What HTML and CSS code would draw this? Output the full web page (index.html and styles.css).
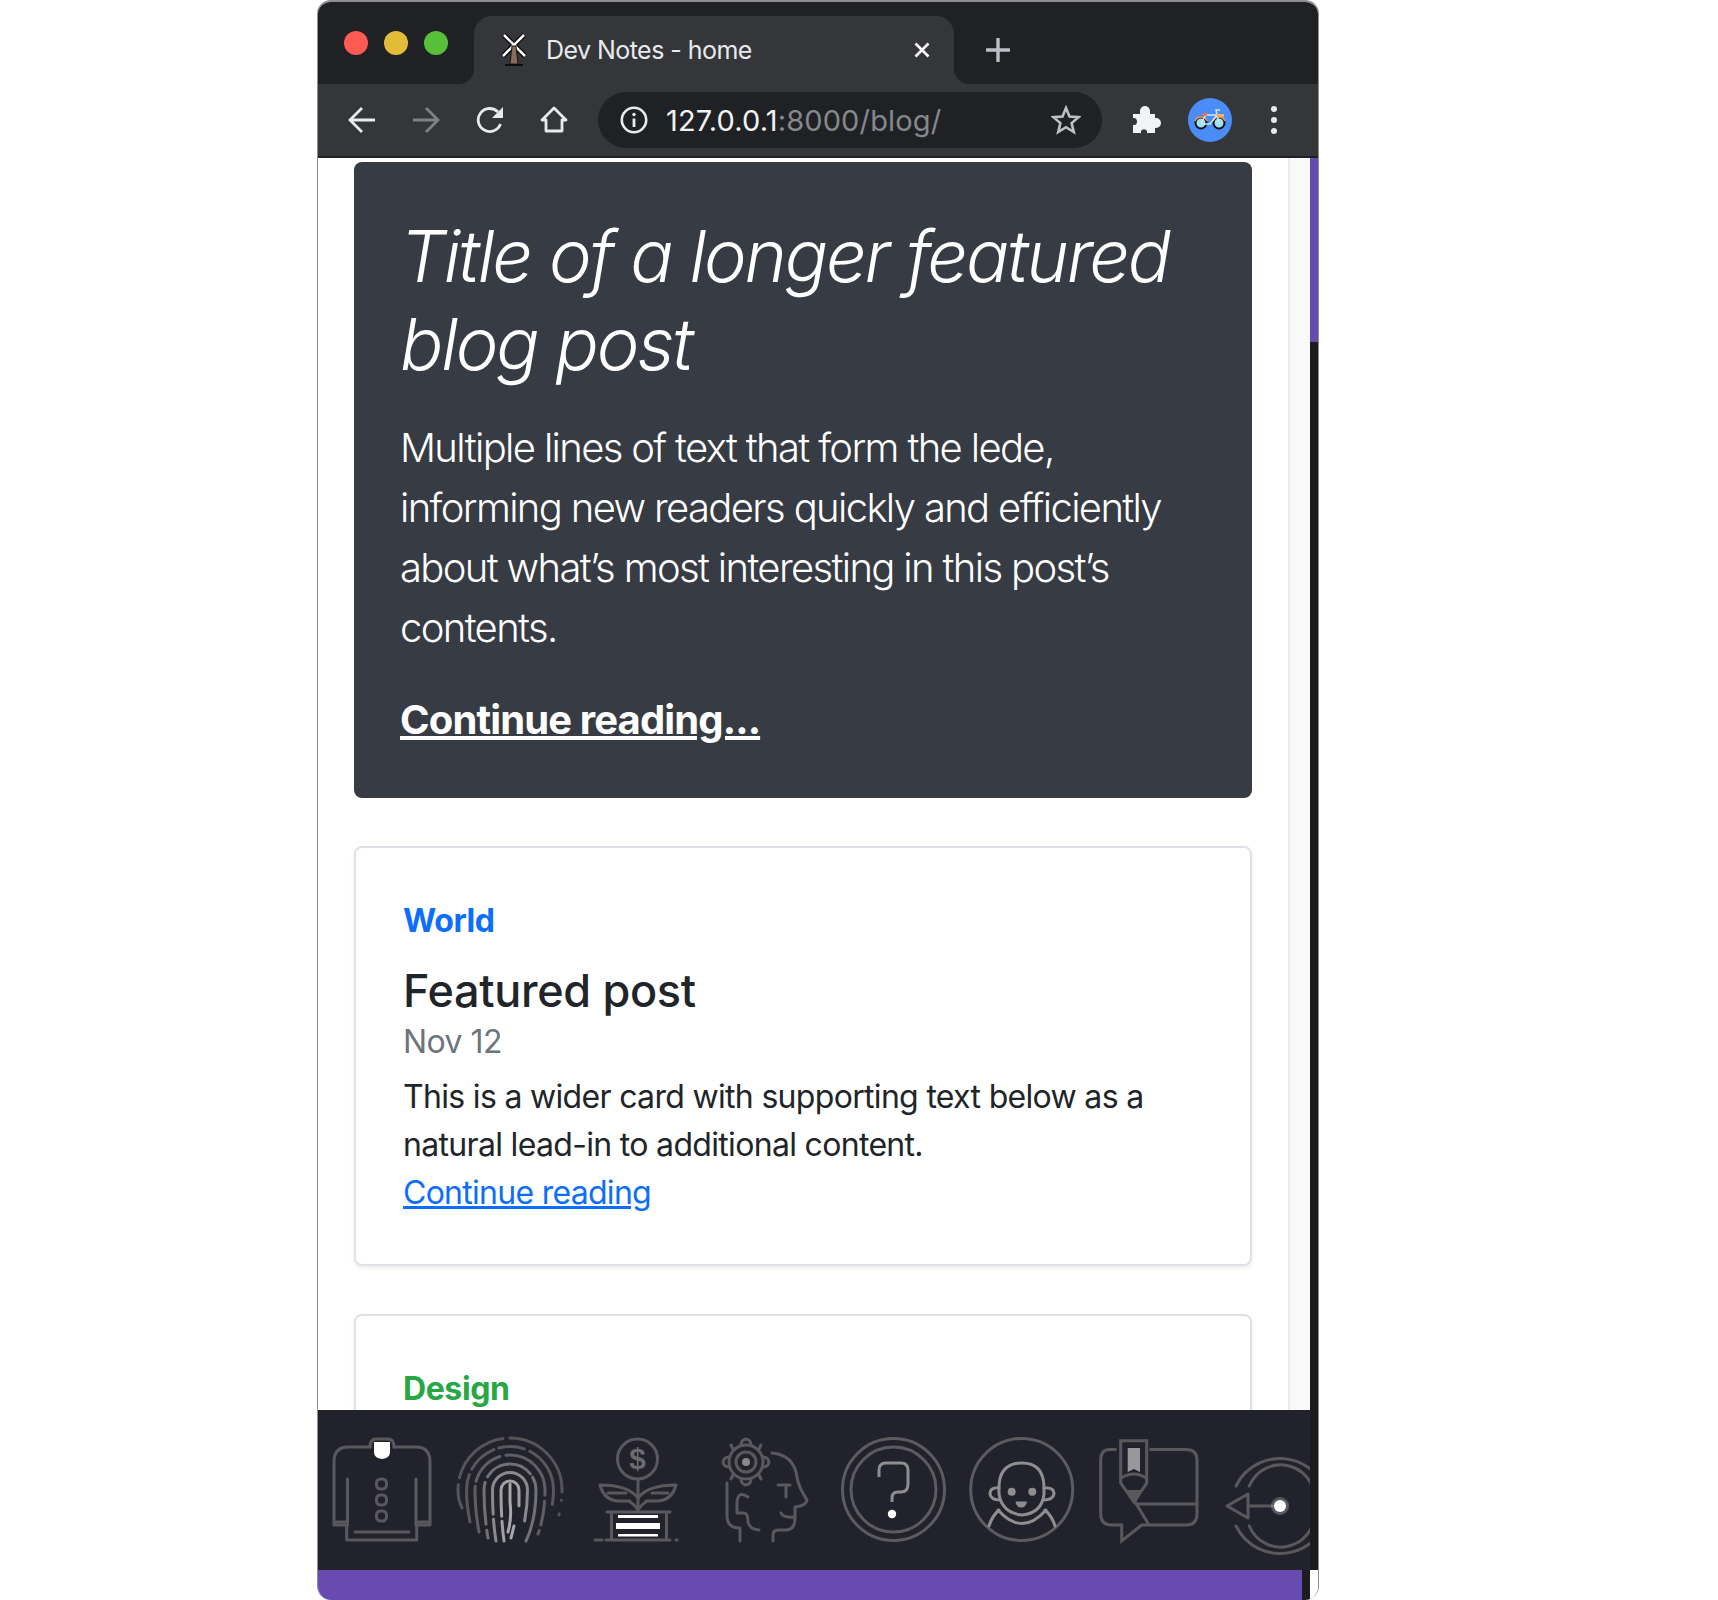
FILE: index.html
```html
<!DOCTYPE html>
<html lang="en">
<head>
    <meta charset="UTF-8">
    <meta name="viewport" content="width=device-width, initial-scale=1.0">
    <title>Dev Notes - home</title>
    <link rel="stylesheet" href="styles.css">
</head>
<body>

    <div class="window">

        <div class="tabstrip">
            <div class="lights">
                <span class="light red"></span>
                <span class="light yellow"></span>
                <span class="light green"></span>
            </div>
            <div class="tab">
                <svg class="favicon" width="28" height="34" viewBox="0 0 28 34">
                    <path d="M4 2 L25 23" stroke="#000" stroke-width="5"/>
                    <path d="M24 2 L3 23" stroke="#000" stroke-width="5"/>
                    <path d="M4 2 L25 23" stroke="#fff" stroke-width="2.5"/>
                    <path d="M24 2 L3 23" stroke="#fff" stroke-width="2.5"/>
                    <path d="M10 31 L12 13 H16 L18 31 Z" fill="#8a6a58" stroke="#1a1a1a" stroke-width="1"/>
                    <path d="M5 32 H23" stroke="#000" stroke-width="1.5"/>
                </svg>
                <span class="tab-title">Dev Notes - home</span>
                <svg class="tab-close" width="16" height="16" viewBox="0 0 16 16">
                    <path d="M1.5 1.5 L14.5 14.5 M14.5 1.5 L1.5 14.5" stroke="#fff" stroke-width="2.6"/>
                </svg>
            </div>
            <svg class="new-tab" width="24" height="24" viewBox="0 0 24 24">
                <path d="M12 1 V23 M1 12 H23" stroke="#bdc1c6" stroke-width="3.4" stroke-linecap="round"/>
            </svg>
        </div>

        <div class="toolbar">
            <svg class="tool" width="28" height="28" viewBox="0 0 28 28">
                <path d="M27 14 H3 M14 2 L2 14 L14 26" fill="none" stroke="#e8eaed" stroke-width="2.8"/>
            </svg>
            <svg class="tool" width="28" height="28" viewBox="0 0 28 28">
                <path d="M1 14 H25 M14 2 L26 14 L14 26" fill="none" stroke="#7f8184" stroke-width="2.8"/>
            </svg>
            <svg class="tool" width="28" height="28" viewBox="0 0 28 28">
                <path d="M24.5 18 A11.5 11.5 0 1 1 22 6" fill="none" stroke="#e8eaed" stroke-width="2.8"/>
                <path d="M27 1 V12 H16 Z" fill="#e8eaed"/>
            </svg>
            <svg class="tool" width="28" height="28" viewBox="0 0 28 28">
                <path d="M2 14 L14 2 L26 14 H22 V25 H6 V14 Z" fill="none" stroke="#e8eaed" stroke-width="2.8" stroke-linejoin="round"/>
            </svg>
            <div class="omnibox">
                <svg class="info" width="28" height="28" viewBox="0 0 28 28">
                    <circle cx="14" cy="14" r="12.2" fill="none" stroke="#e8eaed" stroke-width="2.6"/>
                    <path d="M14 12.5 V21" stroke="#e8eaed" stroke-width="2.8"/>
                    <circle cx="14" cy="8.5" r="1.7" fill="#e8eaed"/>
                </svg>
                <span class="url">127.0.0.1<span class="url-rest">:8000/blog/</span></span>
                <svg class="star" width="30" height="30" viewBox="0 0 30 30">
                    <path d="M15 3 L18.5 11.5 L27.5 12.2 L20.6 18.1 L22.8 27 L15 22.2 L7.2 27 L9.4 18.1 L2.5 12.2 L11.5 11.5 Z" fill="none" stroke="#bdc1c6" stroke-width="2.6"/>
                </svg>
            </div>
            <svg class="puzzle" width="30" height="30" viewBox="0 0 30 30">
                <path d="M2 9 H9 V6 A5 5 0 0 1 19 6 V9 H24 V13 H25 A5 5 0 0 1 25 23 H24 V28 H16 V26 A3.5 3.5 0 0 0 10 26 V28 H2 V20 H4 A4 4 0 0 0 4 13 H2 Z" fill="#f1f3f4"/>
            </svg>
            <div class="avatar">
                <svg width="32" height="22" viewBox="0 0 32 22">
                    <circle cx="7" cy="14" r="5.5" fill="#9fe3f2" stroke="#111" stroke-width="2"/>
                    <circle cx="25" cy="14" r="5.5" fill="#9fe3f2" stroke="#111" stroke-width="2"/>
                    <path d="M1 12 A6.5 6.5 0 0 1 13 12 M19 12 A6.5 6.5 0 0 1 31 12" fill="none" stroke="#f0964a" stroke-width="1.6"/>
                    <path d="M7 14 L12 6 H23 L16 15 H7 M23 6 L25 14 M23 6 L22 1 H26" fill="none" stroke="#cfe9f7" stroke-width="1.4"/>
                    <path d="M8 4 H14 L12 7 H9 Z" fill="#ef6b5c"/>
                    <path d="M22 5 H30 V8 H23 Z" fill="#f4b26a"/>
                </svg>
            </div>
            <div class="menu-dots">
                <span class="dot"></span>
                <span class="dot"></span>
                <span class="dot"></span>
            </div>
        </div>

        <div class="page-area">
            <div class="viewport">
                <div class="content-row">
                    <main class="main">
                        <section class="hero">
                            <h1 class="hero-title">Title of a longer featured blog post</h1>
                            <p class="lede">Multiple lines of text that form the lede, informing new readers quickly and efficiently about what’s most interesting in this post’s contents.</p>
                            <p class="hero-more"><a href="#">Continue reading...</a></p>
                        </section>

                        <article class="post">
                            <strong class="category world">World</strong>
                            <h3 class="post-title">Featured post</h3>
                            <div class="post-date">Nov 12</div>
                            <p class="post-text">This is a wider card with supporting text below as a natural lead-in to additional content.</p>
                            <a class="post-link" href="#">Continue reading</a>
                        </article>

                        <article class="post">
                            <strong class="category design">Design</strong>
                        </article>
                    </main>
                    <div class="side"></div>
                </div>

                <div class="icon-strip">
                    <!-- jacket -->
                    <svg class="strip-icon" width="128" height="160" viewBox="0 0 128 160">
                        <g fill="none" stroke="#59595d" stroke-width="3" stroke-linecap="round" stroke-linejoin="round">
                            <path d="M52 37 H30 Q16 37 16 52 V115 H28.7 V130 H98.7 V115 H112 V52 Q112 37 98 37 H76"/>
                            <path d="M52 37 Q52 29 58 29 H70 Q76 29 76 37"/>
                            <path d="M29.5 69 V115 M98 69 V115 M16 112 H28.7 M98.7 112 H112 M37 122 H91"/>
                            <rect x="58.5" y="69" width="10" height="10" rx="4"/>
                            <rect x="58.5" y="85" width="10" height="10" rx="4"/>
                            <rect x="58.5" y="101" width="10" height="10" rx="4"/>
                        </g>
                        <path d="M56 32 H72 V42 Q72 48 64 49 Q56 48 56 42 Z" fill="#fff"/>
                    </svg>
                    <!-- fingerprint -->
                    <svg class="strip-icon" width="128" height="160" viewBox="0 0 128 160">
                        <g fill="none" stroke-width="3" stroke-linecap="round">
                            <path d="M16 98 Q12 90 12 80 A52 52 0 0 1 116 80 Q116 90 113 105" stroke="#555559" stroke-dasharray="24 7 62 7 84 8 0 14 8"/>
                            <path d="M24 112 Q20.5 95 20.5 80 A43.5 43.5 0 0 1 107.5 80 Q107.5 100 99 118" stroke="#58585c" stroke-dasharray="48 6 30 5 26 6 62 40"/>
                            <path d="M33 122 Q29 100 29 80 A35 35 0 0 1 99 80 Q99 105 92 124" stroke="#5f5f63" stroke-dasharray="46 5 36 6 64 6 24 6 20"/>
                            <path d="M42 128 Q38 105 38 80 A26 26 0 0 1 90 80 Q90 110 80 131" stroke="#717175" stroke-dasharray="8 6 42 6 50 4 70"/>
                            <path d="M50 131 Q46.5 110 46.5 80 A17.5 17.5 0 0 1 81.5 80 Q81.5 105 74 130" stroke="#8a8a8d" stroke-dasharray="22 5 110"/>
                            <path d="M58 131 Q55 110 55 80 A9 9 0 0 1 73 80 V112" stroke="#a0a0a3" stroke-dasharray="20 5 70"/>
                            <path d="M64 74 V92 Q66 108 62 122 M68 116 L65 128" stroke="#a8a8ab"/>
                        </g>
                    </svg>
                    <!-- plant and books -->
                    <svg class="strip-icon" width="128" height="160" viewBox="0 0 128 160">
                        <g fill="none" stroke="#59595d" stroke-width="3" stroke-linecap="round" stroke-linejoin="round">
                            <circle cx="63.5" cy="49" r="20"/>
                            <path d="M64 69 V101"/>
                            <path d="M64 88 Q54 75 26 75 Q30 90 44 91 H56 M34 83 H52"/>
                            <path d="M64 88 Q74 75 102 75 Q98 90 84 91 H72 M94 83 H78"/>
                            <path d="M64 100 Q60 94 56 92 M64 100 Q68 94 72 92"/>
                            <path d="M33 102 H96 M37.5 102 V130 M92.5 102 V130 M32 130 H96 M21 130 H28 M102 130 H103"/>
                        </g>
                        <text class="dollar" x="63.5" y="59">$</text>
                        <path d="M44 105 H84 V108 H44 Z M42 113 H86 V119 H42 Z M44 124 H84 V126.5 H44 Z" fill="#fff"/>
                    </svg>
                    <!-- head with gear -->
                    <svg class="strip-icon" width="128" height="160" viewBox="0 0 128 160">
                        <g fill="none" stroke="#59595d" stroke-width="3" stroke-linecap="round" stroke-linejoin="round">
                            <circle cx="44" cy="52" r="17"/>
                            <circle cx="44" cy="52" r="10"/>
                            <path d="M39 35 Q39 30 44 29 Q49 30 49 35 M39 69 Q39 74 44 75 Q49 74 49 69 M27 47 Q22 47 21 52 Q22 57 27 57 M61 47 Q66 47 67 52 Q66 57 61 57 M31 39 L29 35 M57 39 L59 35 M31 65 L29 69 M57 65 L59 69"/>
                            <path d="M70 43 Q92 45 95 67 Q96 76 105 90 Q104 96 93 97 V108 Q93 119 85 120 H76 Q71 120 71 125 V131"/>
                            <path d="M76 75 H88 M84 75 V87 M79 103 Q81 108 93 107"/>
                            <path d="M25 73 V106 Q25 118 38 118 V131 M46 87 Q36 80 35 92 V103 H42 Q46 103 46 112 Q48 120 57 120"/>
                        </g>
                        <circle cx="44" cy="52" r="4" fill="#8a8a8d"/>
                    </svg>
                    <!-- question mark -->
                    <svg class="strip-icon" width="128" height="160" viewBox="0 0 128 160">
                        <circle cx="63.5" cy="79.5" r="51" fill="none" stroke="#5c5c60" stroke-width="3"/>
                        <circle cx="63.5" cy="79.5" r="42.5" fill="none" stroke="#5c5c60" stroke-width="3"/>
                        <path d="M49 67 V60 Q49 53 56 53 H71 Q78 53 78 60 V74 Q78 82 71 82 H68 Q62 82 62 88 V92" fill="none" stroke="#8e8e91" stroke-width="3"/>
                        <circle cx="62" cy="104" r="4.2" fill="#fff"/>
                    </svg>
                    <!-- face -->
                    <svg class="strip-icon" width="128" height="160" viewBox="0 0 128 160">
                        <circle cx="63.7" cy="79.5" r="51" fill="none" stroke="#5c5c60" stroke-width="3"/>
                        <g fill="none" stroke="#8e8e91" stroke-width="3" stroke-linecap="round">
                            <path d="M41 84 V76 Q42 53 64 53 Q85 53 86 76 V84 Q84 103 64 105 Q44 103 41 84 Z"/>
                            <path d="M41 78 Q32 77 32 84 Q33 90 42 90 M86 78 Q96 77 96 84 Q95 90 85 90"/>
                            <path d="M40 100 Q64 127 88 100 M31 116 Q34 106 41 100 M97 116 Q94 106 87 100"/>
                        </g>
                        <circle cx="53.7" cy="81.7" r="4" fill="#8e8e91"/>
                        <circle cx="74.3" cy="81.7" r="4" fill="#8e8e91"/>
                        <path d="M57.5 91.5 H69 Q68 97.5 63 97.5 Q58.5 97.5 57.5 91.5 Z" fill="#8e8e91"/>
                    </svg>
                    <!-- pencil and speech bubble -->
                    <svg class="strip-icon" width="128" height="160" viewBox="0 0 128 160">
                        <g fill="none" stroke="#59595d" stroke-width="3" stroke-linecap="square">
                            <path d="M29 39.5 H24 Q14.7 39.5 14.7 50 V104 Q14.7 115 26 115 H35.7 V131 L55.7 115 H100 Q111 115 111 104 V50 Q111 39.5 100 39.5 H65"/>
                            <path d="M34.7 30.7 H60.7 V73 L48 92 L34.7 73 Z"/>
                            <path d="M50.7 94 H111 M48 90 L62.3 114"/>
                            <path d="M35 68 Q48 60 60 68"/>
                        </g>
                        <path d="M41.7 38 H54 V62 L48 59 L41.7 62 Z" fill="#98989b"/>
                        <path d="M40 80 H56 L48 92 Z" fill="#59595d"/>
                    </svg>
                    <!-- target with arrow -->
                    <svg class="strip-icon" width="128" height="160" viewBox="0 0 128 160">
                        <g fill="none" stroke="#59595d" stroke-width="3" stroke-linecap="round" stroke-linejoin="round">
                            <path d="M22 76 A49 49 0 0 1 115 96 M22 116 A49 49 0 0 0 115 96"/>
                            <path d="M35.3 76 A34 34 0 0 1 100 96 M35.3 116 A34 34 0 0 0 100 96"/>
                            <path d="M13 96 L34 84 V108 Z M34 96 H58"/>
                        </g>
                        <circle cx="66" cy="96" r="9" fill="#fff" opacity="0.25"/>
                        <circle cx="66" cy="96" r="6" fill="#fff"/>
                    </svg>
                </div>

                <div class="hscroll">
                    <div class="hscroll-thumb"></div>
                    <div class="hscroll-end"></div>
                </div>
            </div>

            <div class="vscroll">
                <div class="vscroll-thumb"></div>
                <div class="vscroll-track"></div>
                <div class="vscroll-end"></div>
            </div>
        </div>

    </div>

</body>
</html>
```

FILE: styles.css
```css
body {
    font-family: Inter, "Liberation Sans", sans-serif;
    background: white;
    margin: 0;
    padding: 0;
}
.window {
    width: 1002px;
    height: 1600px;
    margin-left: 317px;
    box-sizing: border-box;
    display: flex;
    flex-direction: column;
    overflow: hidden;
    border-radius: 14px;
    border: 1px solid #8f8f8f;
    border-width: 2px 1px 0 1px;
}

/* browser top */
.tabstrip {
    height: 82px;
    flex-shrink: 0;
    background-color: #202124;
    display: flex;
    align-items: flex-start;
}
.lights {
    display: flex;
    gap: 16px;
    width: 156px;
    padding: 29px 0 0 26px;
    box-sizing: border-box;
}
.light {
    width: 24px;
    height: 24px;
    border-radius: 50%;
}
.red { background-color: #fe5a54; }
.yellow { background-color: #e3bc37; }
.green { background-color: #57c038; }
.tab {
    position: relative;
    width: 480px;
    height: 68px;
    margin-top: 14px;
    background-color: #35363a;
    border-radius: 18px 18px 0 0;
    display: flex;
    align-items: center;
    padding: 0 24px 0 26px;
    box-sizing: border-box;
    color: #e8eaed;
}
/* the curves where the tab meets the toolbar */
.tab::before,
.tab::after {
    content: "";
    position: absolute;
    bottom: 0;
    width: 16px;
    height: 16px;
}
.tab::before {
    left: -16px;
    background: radial-gradient(circle at 0 0, #202124 16px, #35363a 16.5px);
}
.tab::after {
    right: -16px;
    background: radial-gradient(circle at 100% 0, #202124 16px, #35363a 16.5px);
}
.favicon {
    flex-shrink: 0;
    margin-right: 18px;
}
.tab-title {
    font-size: 25px;
    letter-spacing: -0.55px;
    flex: 1;
}
.new-tab {
    margin: 36px 0 0 32px;
}
.toolbar {
    height: 72px;
    flex-shrink: 0;
    background-color: #35363a;
    border-bottom: 2px solid #202124;
    display: flex;
    align-items: center;
    padding-left: 30px;
}
.tool {
    flex-shrink: 0;
    margin-right: 36px;
}
.omnibox {
    width: 504px;
    height: 56px;
    margin-left: -6px;
    border-radius: 28px;
    background-color: #202124;
    display: flex;
    align-items: center;
    padding: 0 21px 0 22px;
    box-sizing: border-box;
}
.info {
    flex-shrink: 0;
    margin-right: 18px;
}
.url {
    font-size: 29px;
    letter-spacing: 0.15px;
    color: #f1f3f4;
    flex: 1;
}
.url-rest {
    color: #85888c;
}
.puzzle {
    margin-left: 29px;
    flex-shrink: 0;
}
.avatar {
    width: 44px;
    height: 44px;
    margin-left: 27px;
    border-radius: 50%;
    background-color: #4a8df8;
    display: flex;
    align-items: center;
    justify-content: center;
    flex-shrink: 0;
}
.menu-dots {
    display: flex;
    flex-direction: column;
    gap: 5px;
    margin-left: 39px;
}
.dot {
    width: 6px;
    height: 6px;
    border-radius: 50%;
    background-color: #e8eaed;
}

/* page */
.page-area {
    flex: 1;
    display: flex;
    min-height: 0;
}
.viewport {
    flex: 1;
    display: flex;
    flex-direction: column;
    min-width: 0;
}
.content-row {
    flex: 1;
    display: flex;
    min-height: 0;
    overflow: hidden;
}
.main {
    width: 970px;
    box-sizing: border-box;
    padding: 4px 36px 0 36px;
    background-color: white;
    flex-shrink: 0;
}
.side {
    flex: 1;
    background-color: #f9f9f9;
    border-left: 2px solid #ebebeb;
}
.hero {
    background-color: #373b43;
    color: white;
    border-radius: 8px;
    padding: 50px 46px 48px 46px;
    height: 636px;
    box-sizing: border-box;
    margin-bottom: 48px;
}
.hero-title {
    font-size: 72px;
    line-height: 88px;
    font-weight: 300;
    font-style: italic;
    letter-spacing: -2.2px;
    margin: 0 0 30px 0;
}
.lede {
    font-size: 40px;
    line-height: 60px;
    font-weight: 300;
    letter-spacing: -1.65px;
    margin: 0 0 32px 0;
}
.hero-more {
    font-size: 40px;
    line-height: 60px;
    letter-spacing: -0.87px;
    margin: 0;
}
.hero-more a {
    color: white;
    font-weight: 700;
}
.post {
    border: 2px solid #dee2e6;
    border-radius: 8px;
    box-shadow: 0 2px 4px rgba(0, 0, 0, 0.075);
    padding: 49px 47px 47px 47px;
    margin-bottom: 48px;
    color: #212529;
}
.category {
    display: block;
    font-size: 32px;
    line-height: 48px;
    font-weight: 700;
    letter-spacing: -0.4px;
    margin-bottom: 18px;
}
.world { color: #0d6efd; }
.design { color: #28a745; }
.post-title {
    font-size: 45px;
    line-height: 55px;
    font-weight: 500;
    letter-spacing: -0.34px;
    margin: 0;
}
.post-date {
    font-size: 32px;
    line-height: 48px;
    letter-spacing: -0.55px;
    color: #6c757d;
    margin-bottom: 7px;
}
.post-text {
    font-size: 32px;
    line-height: 48px;
    letter-spacing: -0.68px;
    margin: 0;
}
.post-link {
    font-size: 32px;
    line-height: 48px;
    letter-spacing: -0.72px;
    color: #0d6efd;
}
.icon-strip {
    height: 160px;
    flex-shrink: 0;
    background-color: #22222c;
    display: flex;
    overflow: hidden;
}
.strip-icon {
    flex-shrink: 0;
    filter: blur(0.5px);
}
.dollar {
    font-family: "Liberation Sans", sans-serif;
    font-size: 30px;
    font-weight: 700;
    fill: #6c6c70;
    text-anchor: middle;
}
.hscroll {
    height: 30px;
    flex-shrink: 0;
    display: flex;
}
.hscroll-thumb {
    flex: 1;
    background-color: #674bb0;
}
.hscroll-end {
    width: 8px;
    background-color: #1c1c20;
}
.vscroll {
    width: 8px;
    flex-shrink: 0;
    display: flex;
    flex-direction: column;
}
.vscroll-thumb {
    height: 184px;
    background-color: #674bb0;
}
.vscroll-track {
    flex: 1;
    background-color: #1c1c20;
}
.vscroll-end {
    height: 30px;
    background-color: white;
}
```
